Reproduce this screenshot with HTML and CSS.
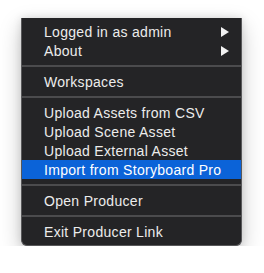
FILE: index.html
```html
<!DOCTYPE html>
<html lang="en">
<head>
    <meta charset="UTF-8">
    <title>Producer Link Menu</title>
    <link rel="stylesheet" href="styles.css">
</head>
<body>
    <div class="menu">
        <div class="menu-item has-sub">Logged in as admin <span class="arrow"></span></div>
        <div class="menu-item has-sub">About <span class="arrow"></span></div>
        <div class="separator"></div>
        <div class="menu-item">Workspaces</div>
        <div class="separator"></div>
        <div class="menu-item">Upload Assets from CSV</div>
        <div class="menu-item">Upload Scene Asset</div>
        <div class="menu-item">Upload External Asset</div>
        <div class="menu-item active">Import from Storyboard Pro</div>
        <div class="separator"></div>
        <div class="menu-item">Open Producer</div>
        <div class="separator"></div>
        <div class="menu-item">Exit Producer Link</div>
    </div>
</body>
</html>
```

FILE: styles.css
```css
:root {
    --menu-bg: #242426;
    --menu-border: #58585a;
    --sep: #4b4b4d;
    --text: #ececec;
    --select: #0b63d8;
}

body {
    margin: 0;
    background: #fff;
    font-family: 'Liberation Sans', Arial, sans-serif;
}

.menu {
    margin: 18px 0 0 21px;
    width: 219px;
    padding: 4px 0;
    background: var(--menu-bg);
    border: 1px solid var(--menu-border);
    border-top: none;
    border-radius: 0 0 6px 6px;
    box-shadow: 0 8px 22px rgba(0, 0, 0, 0.22), 0 0 8px rgba(0, 0, 0, 0.12);
    color: var(--text);
}

.menu-item {
    box-sizing: border-box;
    height: 19px;
    padding: 1px 12px 0 22px;
    font-size: 14px;
    letter-spacing: 0.3px;
    display: flex;
    justify-content: space-between;
    align-items: center;
}

.menu-item.active {
    background: var(--select);
    color: #fff;
}

.arrow {
    width: 0;
    height: 0;
    border-top: 5px solid transparent;
    border-bottom: 5px solid transparent;
    border-left: 8px solid #f2f2f2;
}

.separator {
    height: 2px;
    margin: 5px 0;
    background: var(--sep);
}
```
